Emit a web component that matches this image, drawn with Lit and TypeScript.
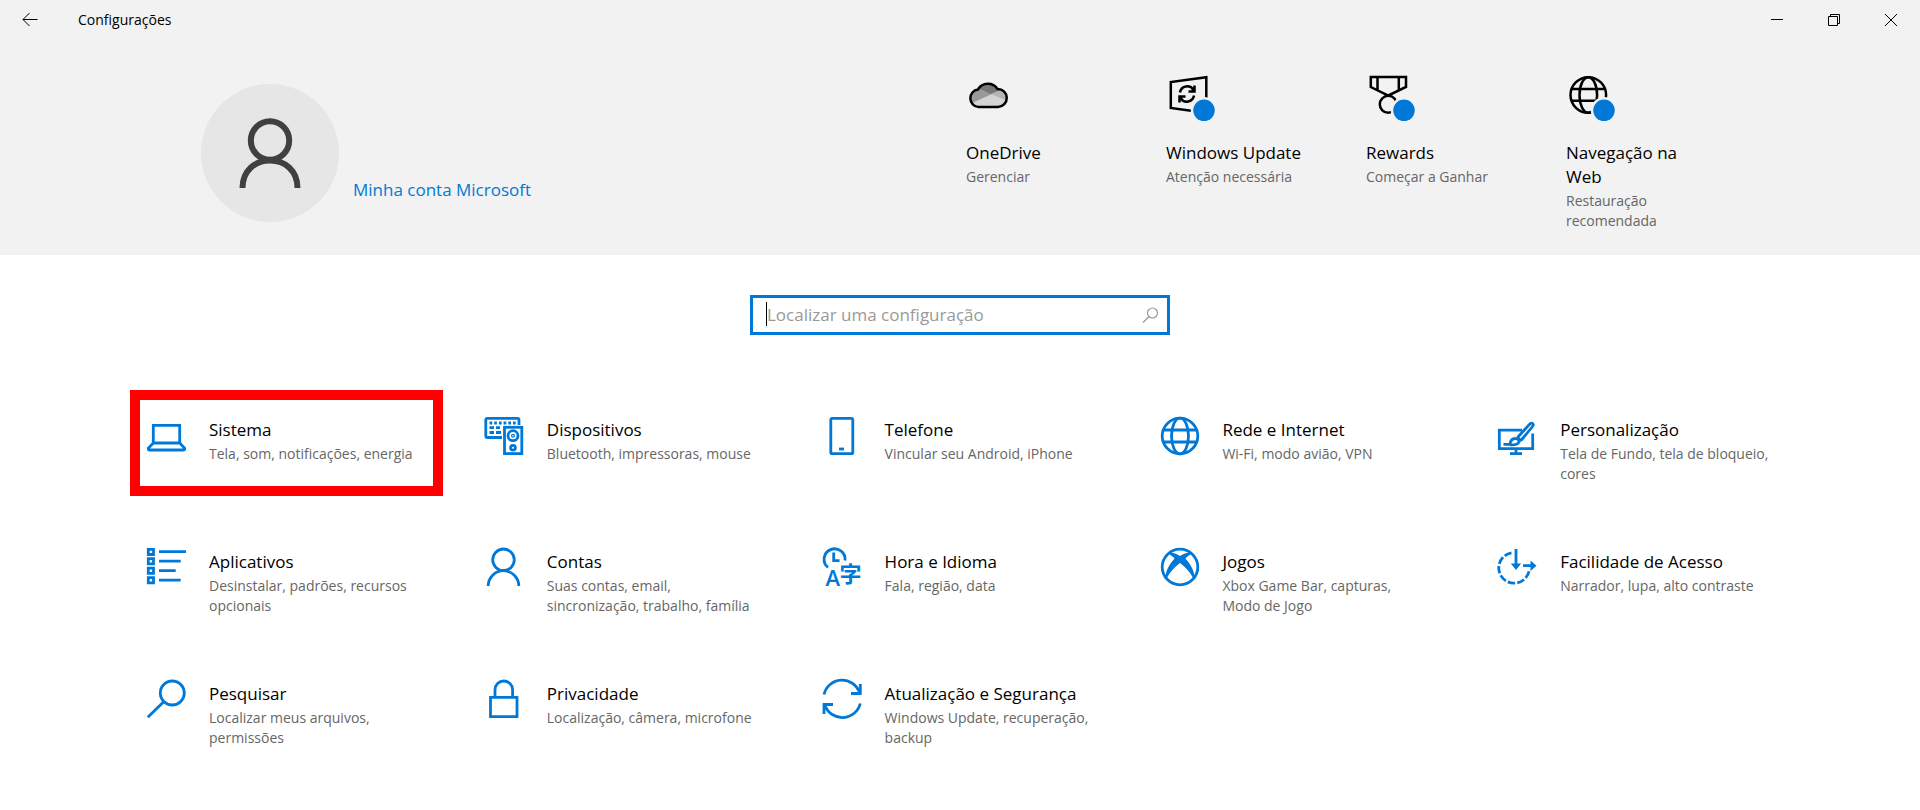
import { LitElement, html, svg, css, TemplateResult, SVGTemplateResult } from "lit";
import { customElement, property } from "lit/decorators.js";

type Glyph = SVGTemplateResult;

interface Category {
  title: string;
  description: string;
  icon: Glyph;
  highlighted?: boolean;
}

interface Status {
  title: string;
  description: string;
  icon: Glyph;
}

const badge = svg`<circle class="badge" cx="38" cy="38.3" r="12" />`;

const statuses: Status[] = [
  {
    title: "OneDrive",
    description: "Gerenciar",
    icon: svg`
      <clipPath id="cloud"><path d="M12.500 35a8.800 8.800 0 0 1-0.500-17.500a11.500 11.500 0 0 1 19.500-0.500a9 9 0 0 1 0.500 18z" /></clipPath>
      <g clip-path="url(#cloud)" stroke="none">
        <rect width="48" height="48" fill="#d4d4d4" />
        <path d="M0 8H48V28L26 22L6 31H0Z" fill="#999" />
        <path d="M12 8H34V20L25 22L12 16Z" fill="#777" />
        <path d="M25 22L34 18H44V30Z" fill="#b4b4b4" />
      </g>
      <path d="M12.500 35a8.800 8.800 0 0 1-0.500-17.500a11.500 11.500 0 0 1 19.500-0.500a9 9 0 0 1 0.500 18z" />`,
  },
  {
    title: "Windows Update",
    description: "Atenção necessária",
    icon: svg`
      <path d="M40.300 26V5.200L4.800 10V36L25 38.800" />
      <path d="M14 20.500a7.300 7.300 0 0 1 13.500-2.500M28.500 13.500V19.500H22.500M28 23.500a7.300 7.300 0 0 1-13.500 2.500M13.500 30.500V24.500H19.500" />
      ${badge}`,
  },
  {
    title: "Rewards",
    description: "Começar a Ganhar",
    icon: svg`
      <path d="M4.800 5H40V15L22.300 23.500L4.800 15ZM11.500 5V18.500M32.800 5V18.500" />
      <circle cx="22.300" cy="32.300" r="8.500" />
      ${badge}`,
  },
  {
    title: "Navegação na Web",
    description: "Restauração recomendada",
    icon: svg`
      <circle cx="22.300" cy="23" r="17.800" />
      <ellipse cx="22.300" cy="23" rx="8.800" ry="17.800" />
      <path d="M5.500 17H39M5.500 28.700H39" />
      ${badge}`,
  },
];

const categories: Category[] = [
  {
    title: "Sistema",
    description: "Tela, som, notificações, energia",
    highlighted: true,
    icon: svg`<path d="M7.300 28V10.300H33.700V28ZM7.300 28L2.300 33.200V34Q2.300 35 3.300 35H37.700Q38.700 35 38.700 34V33.200L33.700 28" />`,
  },
  {
    title: "Dispositivos",
    description: "Bluetooth, impressoras, mouse",
    icon: svg`
      <path d="M18 22.500H3.300Q1.800 22.500 1.800 21V4.800Q1.800 3.300 3.300 3.300H33.500Q35 3.300 35 4.800V10" />
      <path d="M5.500 8H33" stroke-dasharray="2.700 2" />
      <path d="M5.500 12.700H10M12 12.700H16M5.500 17.500H10M12 17.500H17" />
      <rect x="20.500" y="12.300" width="17.300" height="26.300" />
      <circle cx="29" cy="20.700" r="5" /><circle cx="29" cy="20.700" r="0.600" />
      <circle cx="29" cy="32.700" r="2.400" />`,
  },
  {
    title: "Telefone",
    description: "Vincular seu Android, iPhone",
    icon: svg`<rect x="8.800" y="3.300" width="22" height="35.400" rx="1.500" /><path d="M17 34H22" />`,
  },
  {
    title: "Rede e Internet",
    description: "Wi-Fi, modo avião, VPN",
    icon: svg`<circle cx="21" cy="21" r="17.800" /><ellipse cx="21" cy="21" rx="8.500" ry="17.800" /><path d="M4.500 15H37.500M4.500 27H37.500" />`,
  },
  {
    title: "Personalização",
    description: "Tela de Fundo, tela de bloqueio, cores",
    icon: svg`
      <path d="M25 15.200H2.300V33.700H35.700V18.500M19 34V38.500M13 38.700H25" />
      <path d="M20.500 22.500L33 8.800Q35 7.300 36 9Q36.700 10 35.500 11.500L24 25.500M20 22L24.500 26" />
      <path d="M6.500 29.300H13Q13.500 23.500 18.500 23.500Q22.500 24.500 22 27Q20.500 30.500 13 29.800" />`,
  },
  {
    title: "Aplicativos",
    description: "Desinstalar, padrões, recursos opcionais",
    icon: svg`
      <path d="M2.300 2.300h5.200v5.200h-5.200zM2.300 11.700h5.200v5.200h-5.200zM2.300 21.200h5.200v5.200h-5.200zM2.300 30.700h5.200v5.200h-5.200z" />
      <path d="M13 4.700H40M13 14.200H34.700M13 23.700H29.700M13 33.200H34.700" />`,
  },
  {
    title: "Contas",
    description: "Suas contas, email, sincronização, trabalho, família",
    icon: svg`<circle cx="19.500" cy="12.800" r="10.800" /><path d="M4.200 39a15.300 15.300 0 0 1 30.600 0" />`,
  },
  {
    title: "Hora e Idioma",
    description: "Fala, região, data",
    icon: svg`
      <path d="M6 20.500A10.500 10.500 0 1 1 23 13.500M11.700 5.500V13.700H17.500" />
      <text class="latin" x="3.500" y="39">A</text>
      <text class="han" x="17.500" y="35">字</text>`,
  },
  {
    title: "Jogos",
    description: "Xbox Game Bar, capturas, Modo\u00a0de Jogo",
    icon: svg`
      <circle cx="21" cy="20" r="17.800" />
      <path class="solid" d="M9 6.500C13 4.800 17 6.500 21 9C25 6.500 29 4.800 33 6.500C31 7.500 28 9.500 26.500 11.500C32 18 37 26 34.700 32.500C32 26 26 19.500 21 16C16 19.500 10 26 7.300 32.500C5 26 10 18 15.500 11.500C14 9.500 11 7.500 9 6.500Z" />`,
  },
  {
    title: "Facilidade de Acesso",
    description: "Narrador, lupa, alto contraste",
    icon: svg`
      <path d="M14.500 5.800A15.300 15.300 0 1 0 32.300 22.500" stroke-dasharray="7.500 2.200" />
      <path d="M19 2V19M26 18.700H35" />
      <path class="solid" d="M13.800 16.500H24.200L19 23ZM33.500 13.500V24L39.500 18.700Z" />`,
  },
  {
    title: "Pesquisar",
    description: "Localizar meus arquivos, permissões",
    icon: svg`<circle cx="26.300" cy="14" r="12" /><path d="M17.700 22.700L1.800 38.300" />`,
  },
  {
    title: "Privacidade",
    description: "Localização, câmera, microfone",
    icon: svg`<path d="M6.500 18.300H33V37.700H6.500ZM11 18V10.800a8.800 8.800 0 0 1 17.600 0V18" />`,
  },
  {
    title: "Atualização e Segurança",
    description: "Windows Update, recuperação, backup",
    icon: svg`
      <path d="M2 15.500A18.500 18.500 0 0 1 37.500 13.500M38.300 5V14.500H29M38.300 24.500A18.500 18.500 0 0 1 3 26.500M2 35V25.500H11" />`,
  },
];

const fontStack = css`"Segoe UI", "Open Sans", "Noto Sans", sans-serif`;

@customElement("status-card")
class StatusCard extends LitElement {
  @property({ attribute: false }) item!: Status;

  static styles = css`
    :host { display: block; width: 140px; }
    .card {
      display: block; width: 100%; padding: 0; border: 0; background: none;
      text-align: left; font-family: ${fontStack}; color: #000; cursor: pointer;
    }
    .icon {
      display: block; width: 48px; height: 52px; margin-bottom: 17px; overflow: visible;
      fill: none; stroke: #000; stroke-width: 2.500;
    }
    .badge { fill: #0078d7; stroke: #f2f2f2; stroke-width: 2.500; }
    .title { display: block; font-size: 17px; line-height: 24px; }
    .description { display: block; margin-top: 2px; font-size: 14px; line-height: 20px; color: #666; }
  `;

  render(): TemplateResult {
    return html`
      <button class="card" type="button">
        <svg class="icon" viewBox="0 0 48 52" aria-hidden="true">${this.item.icon}</svg>
        <span class="title">${this.item.title}</span>
        <span class="description">${this.item.description}</span>
      </button>`;
  }
}

@customElement("category-card")
class CategoryCard extends LitElement {
  @property({ attribute: false }) item!: Category;

  static styles = css`
    :host { display: block; }
    .card {
      display: flex; align-items: flex-start; gap: 23px; box-sizing: border-box;
      width: 100%; min-height: 106px; padding: 15px 8px 0 6px;
      border: 10px solid transparent; background: none; text-align: left;
      font-family: ${fontStack}; color: #000; cursor: pointer;
    }
    .highlighted { border-color: #f00; }
    .icon {
      flex: none; width: 40px; height: 40px; overflow: visible;
      fill: none; stroke: #0078d7; stroke-width: 2.800;
    }
    .solid { fill: #0078d7; stroke: none; }
    .latin { font: 600 22px "Open Sans", sans-serif; fill: #0078d7; stroke: none; }
    .han { font: 700 22px "Noto Sans CJK JP", sans-serif; fill: #0078d7; stroke: none; }
    .text { flex: 1; min-width: 0; }
    .title { display: block; margin-top: 3px; font-size: 17px; line-height: 24px; }
    .description { display: block; margin-top: 2px; font-size: 14px; line-height: 20px; color: #666; }
  `;

  render(): TemplateResult {
    return html`
      <button class="card ${this.item.highlighted ? "highlighted" : ""}" type="button">
        <svg class="icon" viewBox="0 0 40 40" aria-hidden="true">${this.item.icon}</svg>
        <span class="text">
          <span class="title">${this.item.title}</span>
          <span class="description">${this.item.description}</span>
        </span>
      </button>`;
  }
}

@customElement("app-root")
class AppRoot extends LitElement {
  static styles = css`
    :host {
      display: block; min-height: 100vh; background: #fff; color: #000;
      font-family: ${fontStack};
    }
    .header { background: #f2f2f2; padding-bottom: 24px; }
    .titlebar { display: flex; align-items: center; height: 40px; padding-right: 1px; }
    .window-title { flex: 1; margin: 0 0 0 18px; font-size: 14px; line-height: 20px; font-weight: 400; }
    .chrome {
      display: flex; align-items: center; justify-content: center;
      width: 57px; height: 40px; padding: 0; border: 0; background: none;
    }
    .back { width: 60px; }
    .chrome-icon { width: 16px; height: 16px; fill: none; stroke: #000; stroke-width: 1; }
    .overview {
      display: flex; justify-content: space-between; align-items: flex-start;
      padding: 32px 214px 0 201px;
    }
    .account { display: flex; align-items: flex-end; gap: 14px; padding-top: 12px; }
    .avatar { width: 138px; height: 138px; }
    .avatar-disc { fill: #e6e6e6; }
    .avatar-person { fill: none; stroke: #404040; stroke-width: 6; }
    .account-link { margin-bottom: 20px; font-size: 17px; line-height: 24px; color: #0078d7; text-decoration: none; }
    .statuses { display: flex; gap: 60px; }
    .search {
      position: relative; display: flex; align-items: center; box-sizing: border-box;
      width: 420px; max-width: 90%; height: 40px; margin: 40px auto 55px;
      padding: 0 8px 0 14px; border: 3px solid #0078d7; background: #fff;
    }
    .search-input {
      flex: 1; min-width: 0; padding: 0; border: 0; outline: 0; background: none;
      font-family: inherit; font-size: 17px; line-height: 24px; color: #000;
    }
    .search-input::placeholder { color: #999; opacity: 1; }
    .caret { position: absolute; left: 13px; top: 4px; width: 1px; height: 24px; background: #000; }
    .search-icon { width: 17px; height: 17px; fill: none; stroke: #999; stroke-width: 1.200; }
    .categories {
      display: grid; grid-template-columns: repeat(5, minmax(0, 1fr));
      gap: 26px 25px; padding: 0 126px 40px 130px;
    }
    @media (max-width: 1500px) {
      .categories { grid-template-columns: repeat(auto-fill, minmax(300px, 1fr)); padding: 0 40px 40px; }
      .overview { flex-wrap: wrap; gap: 32px; padding: 32px 60px 0; }
    }
  `;

  render(): TemplateResult {
    return html`
      <header class="header">
        <div class="titlebar">
          <button class="chrome back" type="button" aria-label="Voltar">
            <svg class="chrome-icon" viewBox="0 0 16 16"><path d="M15.500 7.500H1M7.500 1L1 7.500L7.500 14" /></svg>
          </button>
          <h1 class="window-title">Configurações</h1>
          <button class="chrome" type="button" aria-label="Minimizar">
            <svg class="chrome-icon" viewBox="0 0 16 16"><path d="M2 7.500H14" /></svg>
          </button>
          <button class="chrome" type="button" aria-label="Restaurar">
            <svg class="chrome-icon" viewBox="0 0 16 16"><path d="M2.500 4.500H11.500V13.500H2.500ZM4.500 4.500V2.500H13.500V11.500H11.500" /></svg>
          </button>
          <button class="chrome" type="button" aria-label="Fechar">
            <svg class="chrome-icon" viewBox="0 0 16 16"><path d="M2 2L14 14M14 2L2 14" /></svg>
          </button>
        </div>
        <div class="overview">
          <div class="account">
            <svg class="avatar" viewBox="0 0 138 138" aria-hidden="true">
              <circle class="avatar-disc" cx="69" cy="69" r="69" />
              <g class="avatar-person">
                <circle cx="69" cy="56.500" r="19.200" />
                <path d="M41.500 104C41.500 86.500 54 76.500 69 76.500S96.500 86.500 96.500 104" />
              </g>
            </svg>
            <a class="account-link" href="#conta">Minha conta Microsoft</a>
          </div>
          <div class="statuses">
            ${statuses.map((item) => html`<status-card .item=${item}></status-card>`)}
          </div>
        </div>
      </header>
      <main>
        <div class="search">
          <input class="search-input" type="text" aria-label="Localizar uma configuração" placeholder="Localizar uma configuração" />
          <span class="caret"></span>
          <svg class="search-icon" viewBox="0 0 17 17" aria-hidden="true"><circle cx="10.500" cy="6" r="5" /><path d="M7 9.500L1 15.500" /></svg>
        </div>
        <div class="categories">
          ${categories.map((item) => html`<category-card .item=${item}></category-card>`)}
        </div>
      </main>`;
  }
}
